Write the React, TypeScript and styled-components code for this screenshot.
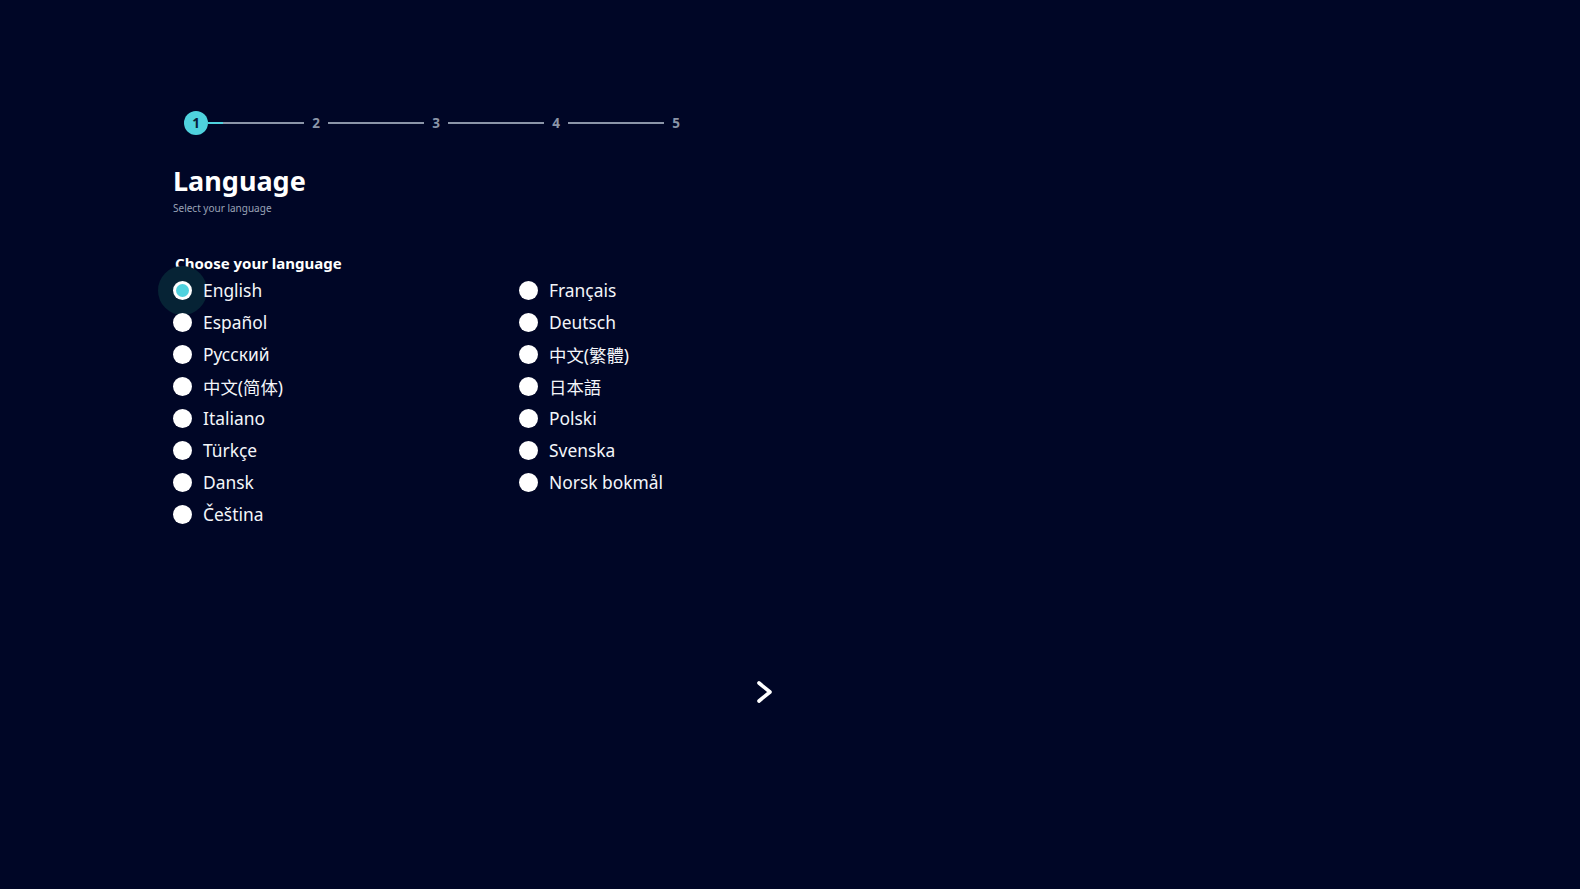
import styled, { createGlobalStyle } from 'styled-components';
import { useState } from "react";

const GlobalStyle = createGlobalStyle`
  html, body {
    margin: 0;
    padding: 0;
    background: #000626;
  }
  body {
    font-family: "Noto Sans", "Noto Sans CJK SC", sans-serif;
    color: #ffffff;
  }
`;

const Page = styled.div`
  min-height: 889px;
  box-sizing: border-box;
  padding: 111px 0 0 173px;
  display: flex;
  flex-direction: column;
`;

const Stepper = styled.div`
  display: flex;
  align-items: center;
  width: 504px;
  margin-left: 11px;
  height: 24px;
`;

const StepDot = styled.div<{ active?: boolean }>`
  width: 24px;
  height: 24px;
  flex: none;
  border-radius: 50%;
  display: flex;
  align-items: center;
  justify-content: center;
  font-size: 13.5px;
  font-weight: 700;
  background: ${(p) => (p.active ? "#4fd2de" : "transparent")};
  color: ${(p) => (p.active ? "#06203a" : "#8b95a8")};
`;

const StepLine = styled.div<{ progress?: number }>`
  flex: 1;
  height: 2px;
  background: linear-gradient(
    to right,
    #4fd2de 0,
    #4fd2de ${(p) => p.progress ?? 0}px,
    #8b95a8 ${(p) => p.progress ?? 0}px
  );
`;

const Title = styled.h1`
  margin: 28px 0 0;
  font-size: 27px;
  font-weight: 700;
  line-height: 36px;
`;

const Subtitle = styled.p`
  margin: 2px 0 0;
  font-size: 10px;
  line-height: 14px;
  color: #9aa3b6;
`;

const Fieldset = styled.div`
  margin-top: 38px;
  display: flex;
  flex-direction: column;
`;

const Legend = styled.div`
  font-size: 15px;
  font-weight: 700;
  line-height: 20px;
  padding-left: 2px;
  margin-bottom: 1px;
`;

const Options = styled.div`
  display: grid;
  grid-template-columns: 346px auto;
  grid-auto-flow: column;
  grid-template-rows: repeat(8, 32px);
  width: 700px;
`;

const Option = styled.label`
  display: flex;
  align-items: center;
  gap: 11px;
  font-size: 17.4px;
  cursor: pointer;
  color: #f4f6fa;
`;

const OptionText = styled.span`
  position: relative;
`;

const RadioWrap = styled.span<{ focus?: boolean }>`
  position: relative;
  width: 19px;
  height: 19px;
  flex: none;
  &::before {
    content: "";
    position: absolute;
    left: -15px;
    top: -15px;
    width: 49px;
    height: 49px;
    border-radius: 50%;
    background: ${(p) => (p.focus ? "#062335" : "transparent")};
  }
`;

const RadioDot = styled.span<{ checked?: boolean }>`
  position: absolute;
  inset: 0;
  border-radius: 50%;
  background: #ffffff;
  &::after {
    content: "";
    position: absolute;
    inset: 3px;
    border-radius: 50%;
    background: ${(p) => (p.checked ? "#4fd2de" : "transparent")};
  }
`;

const HiddenInput = styled.input`
  position: absolute;
  opacity: 0;
  width: 0;
  height: 0;
`;

const NextRow = styled.div`
  display: flex;
  justify-content: flex-start;
  padding-left: 580px;
  margin-top: 149px;
`;

const NextButton = styled.button`
  background: none;
  border: none;
  padding: 0;
  width: 24px;
  height: 26px;
  display: flex;
  align-items: center;
  justify-content: center;
  cursor: pointer;
`;

const languages = [
  "English",
  "Español",
  "Русский",
  "中文(简体)",
  "Italiano",
  "Türkçe",
  "Dansk",
  "Čeština",
  "Français",
  "Deutsch",
  "中文(繁體)",
  "日本語",
  "Polski",
  "Svenska",
  "Norsk bokmål",
];

function App(): JSX.Element {
  const [selected, setSelected] = useState("English");
  return (
    <>
      <GlobalStyle />
      <Page>
        <Stepper>
          <StepDot active>1</StepDot>
          <StepLine progress={15} />
          <StepDot>2</StepDot>
          <StepLine />
          <StepDot>3</StepDot>
          <StepLine />
          <StepDot>4</StepDot>
          <StepLine />
          <StepDot>5</StepDot>
        </Stepper>
        <Title>Language</Title>
        <Subtitle>Select your language</Subtitle>
        <Fieldset>
          <Legend>Choose your language</Legend>
          <Options>
            {languages.map((lang) => (
              <Option key={lang}>
                <RadioWrap focus={lang === selected}>
                  <HiddenInput
                    type="radio"
                    name="language"
                    checked={lang === selected}
                    onChange={() => setSelected(lang)}
                  />
                  <RadioDot checked={lang === selected} />
                </RadioWrap>
                <OptionText>{lang}</OptionText>
              </Option>
            ))}
          </Options>
        </Fieldset>
        <NextRow>
          <NextButton aria-label="Next">
            <svg width="20" height="24" viewBox="0 0 20 24">
              <polyline
                points="4,3 15,12 4,21"
                fill="none"
                stroke="#ffffff"
                strokeWidth="3.6"
                strokeLinecap="round"
                strokeLinejoin="round"
              />
            </svg>
          </NextButton>
        </NextRow>
      </Page>
    </>
  );
}

export default App;
